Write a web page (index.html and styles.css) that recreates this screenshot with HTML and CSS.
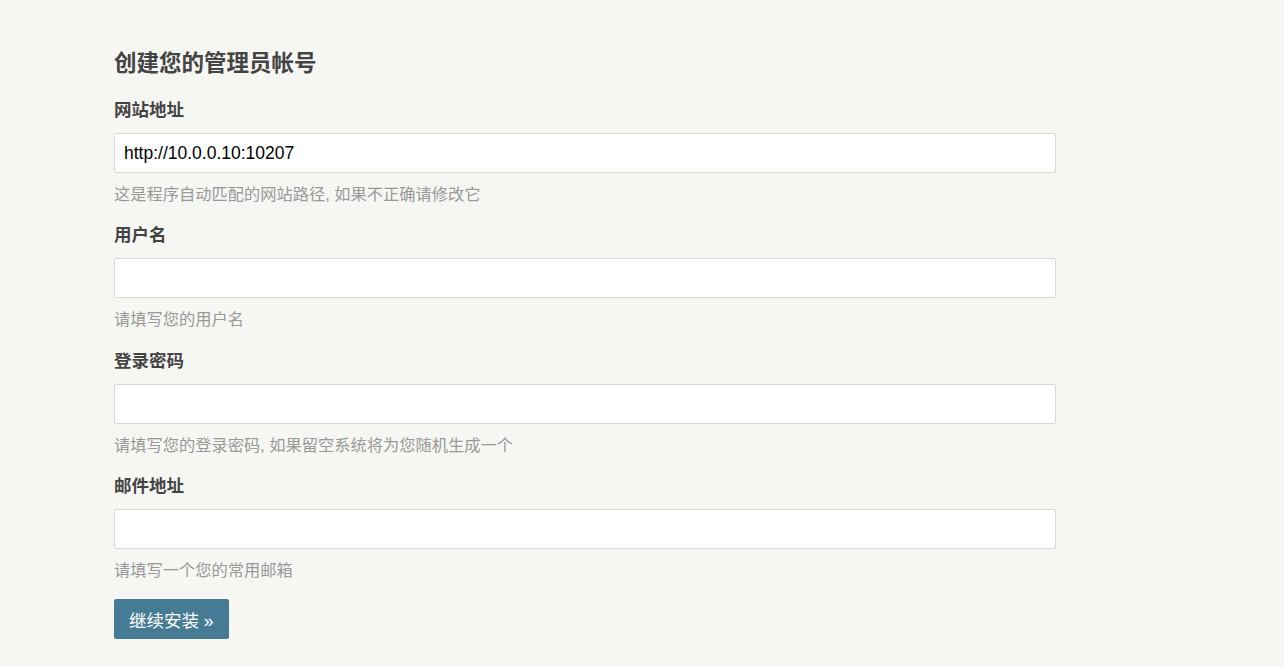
FILE: index.html
```html
<!DOCTYPE html>
<html>
    <head>
        <title>Typecho 安装程序</title>
        <meta charset="UTF-8">
        <link rel="stylesheet" href="styles.css">
    </head>
    <body>
        <div class="main">
            <form class="install-form">
                <h3 class="title">创建您的管理员帐号</h3>
                <ul class="fields">
                    <li class="field">
                        <label class="field-label" for="siteUrl">网站地址</label>
                        <input class="text" type="text" id="siteUrl" value="http://10.0.0.10:10207">
                        <p class="description">这是程序自动匹配的网站路径, 如果不正确请修改它</p>
                    </li>
                    <li class="field">
                        <label class="field-label" for="userName">用户名</label>
                        <input class="text" type="text" id="userName">
                        <p class="description">请填写您的用户名</p>
                    </li>
                    <li class="field">
                        <label class="field-label" for="userPassword">登录密码</label>
                        <input class="text" type="password" id="userPassword">
                        <p class="description">请填写您的登录密码, 如果留空系统将为您随机生成一个</p>
                    </li>
                    <li class="field">
                        <label class="field-label" for="userMail">邮件地址</label>
                        <input class="text" type="text" id="userMail">
                        <p class="description">请填写一个您的常用邮箱</p>
                    </li>
                </ul>
                <p class="submit">
                    <button class="btn-primary" type="button">继续安装 &raquo;</button>
                </p>
            </form>
        </div>
    </body>
</html>
```

FILE: styles.css
```css
html, body{
    margin: 0;
    padding: 0;
}

body{
    background: #F6F6F3;
    color: #444;
    font-family: "Liberation Sans", "Noto Sans CJK SC", sans-serif;
    font-size: 17.5px;
}

.main{
    padding: 49px 0 0 114px;
}

.install-form{
    width: 942px;
}

.title{
    margin: 0 0 19px 0;
    font-size: 22.5px;
    line-height: 30px;
    font-weight: bold;
}

.fields{
    list-style: none;
    margin: 0;
    padding: 0;
}

.field{
    display: flex;
    flex-direction: column;
    margin-bottom: 17.33px;
}

.field-label{
    display: block;
    font-weight: bold;
    line-height: 24px;
    margin-bottom: 11px;
}

.text{
    box-sizing: border-box;
    width: 100%;
    height: 40px;
    margin: 0;
    padding: 0 9px;
    border: 1px solid #D9D9D6;
    border-radius: 2px;
    background: #FFF;
    color: #000;
    font-family: "Liberation Sans", "Noto Sans CJK SC", sans-serif;
    font-size: 17.5px;
    outline: none;
}

.description{
    margin: 9px 0 0 0;
    color: #999;
    font-size: 16.25px;
    line-height: 24px;
}

.submit{
    margin: 0;
}

.btn-primary{
    height: 40px;
    padding: 0 15px;
    border: none;
    border-radius: 2px;
    background: #467B96;
    color: #FFF;
    font-family: "Liberation Sans", "Noto Sans CJK SC", sans-serif;
    font-size: 17.5px;
    cursor: pointer;
}
```
